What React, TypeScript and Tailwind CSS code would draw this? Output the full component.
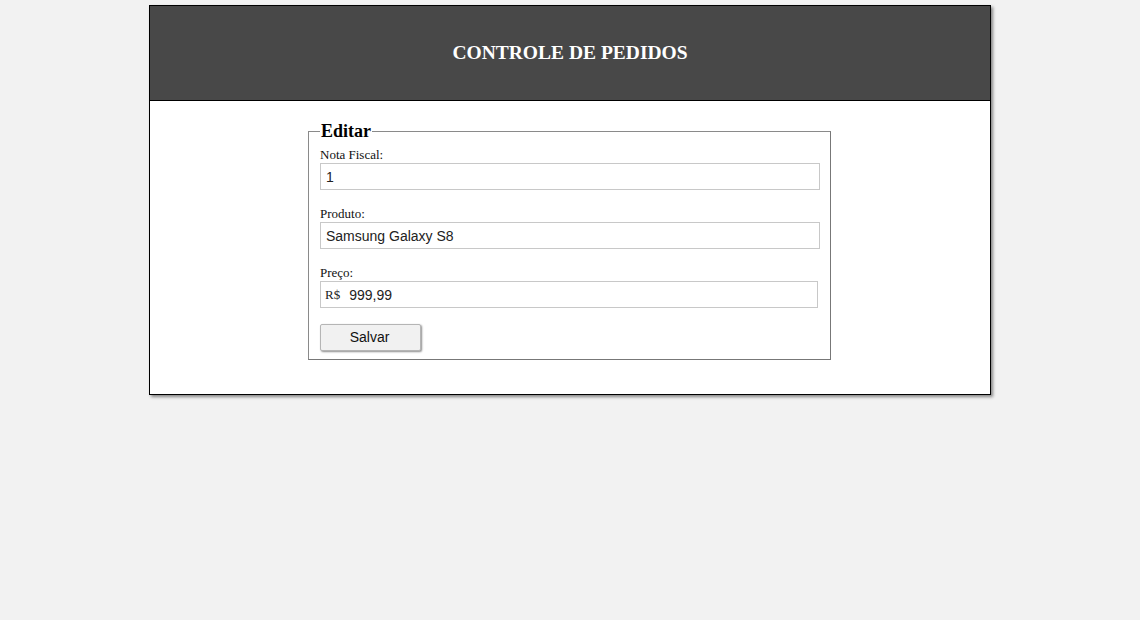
import React, { useState } from 'react';

const serif = { fontFamily: '"Liberation Serif", "Times New Roman", serif' };

export default function App() {
  const [nota, setNota] = useState('1');
  const [produto, setProduto] = useState('Samsung Galaxy S8');
  const [preco, setPreco] = useState('999,99');

  return (
    <div className="min-h-[620px] bg-[#f2f2f2] pt-[5px]" style={serif}>
      <div className="mx-auto w-[842px] border border-black bg-white shadow-[2px_2px_3px_rgba(0,0,0,0.45)]">
        <header className="flex h-[95px] items-center justify-center border-b border-black bg-[#484848]">
          <h1 className="text-[19.5px] font-bold text-white">CONTROLE DE PEDIDOS</h1>
        </header>

        <div className="pl-[158px] pr-[159px] pt-[20px] pb-[34px]">
          <fieldset className="min-w-0 border border-[#8a8a8a] border-r-[#777] border-b-[#777] pl-[11px] pr-[10px] pb-[8px]">
            <legend className="px-[1px] text-[18px] leading-[21px] font-bold text-black">Editar</legend>

            <label className="mt-[5px] block text-[13px] leading-[16px] text-[#111]">Nota Fiscal:</label>
            <input
              value={nota}
              onChange={(e) => setNota(e.target.value)}
              className="block h-[27px] w-[500px] border border-[#c8c8c8] px-[5px] font-['Liberation_Sans',Arial,sans-serif] text-[14px] text-[#222] outline-none"
            />

            <label className="mt-[16px] block text-[13px] leading-[16px] text-[#111]">Produto:</label>
            <input
              value={produto}
              onChange={(e) => setProduto(e.target.value)}
              className="block h-[27px] w-[500px] border border-[#c8c8c8] px-[5px] font-['Liberation_Sans',Arial,sans-serif] text-[14px] text-[#222] outline-none"
            />

            <label className="mt-[16px] block text-[13px] leading-[16px] text-[#111]">Preço:</label>
            <div className="flex h-[27px] w-[498px] items-center border border-[#c8c8c8] pl-[4px]">
              <span className="text-[13px] text-[#222]">R$</span>
              <input
                value={preco}
                onChange={(e) => setPreco(e.target.value)}
                className="h-full flex-1 pl-[9px] font-['Liberation_Sans',Arial,sans-serif] text-[14px] text-[#222] outline-none"
              />
            </div>

            <button className="mt-[16px] block h-[27px] w-[101px] rounded-[2px] border border-[#b5b5b5] bg-[#f1f1f1] pr-[2px] font-['Liberation_Sans',Arial,sans-serif] text-[14px] text-[#111] shadow-[1px_1px_2px_rgba(0,0,0,0.45)]">
              Salvar
            </button>
          </fieldset>
        </div>
      </div>
    </div>
  );
}
